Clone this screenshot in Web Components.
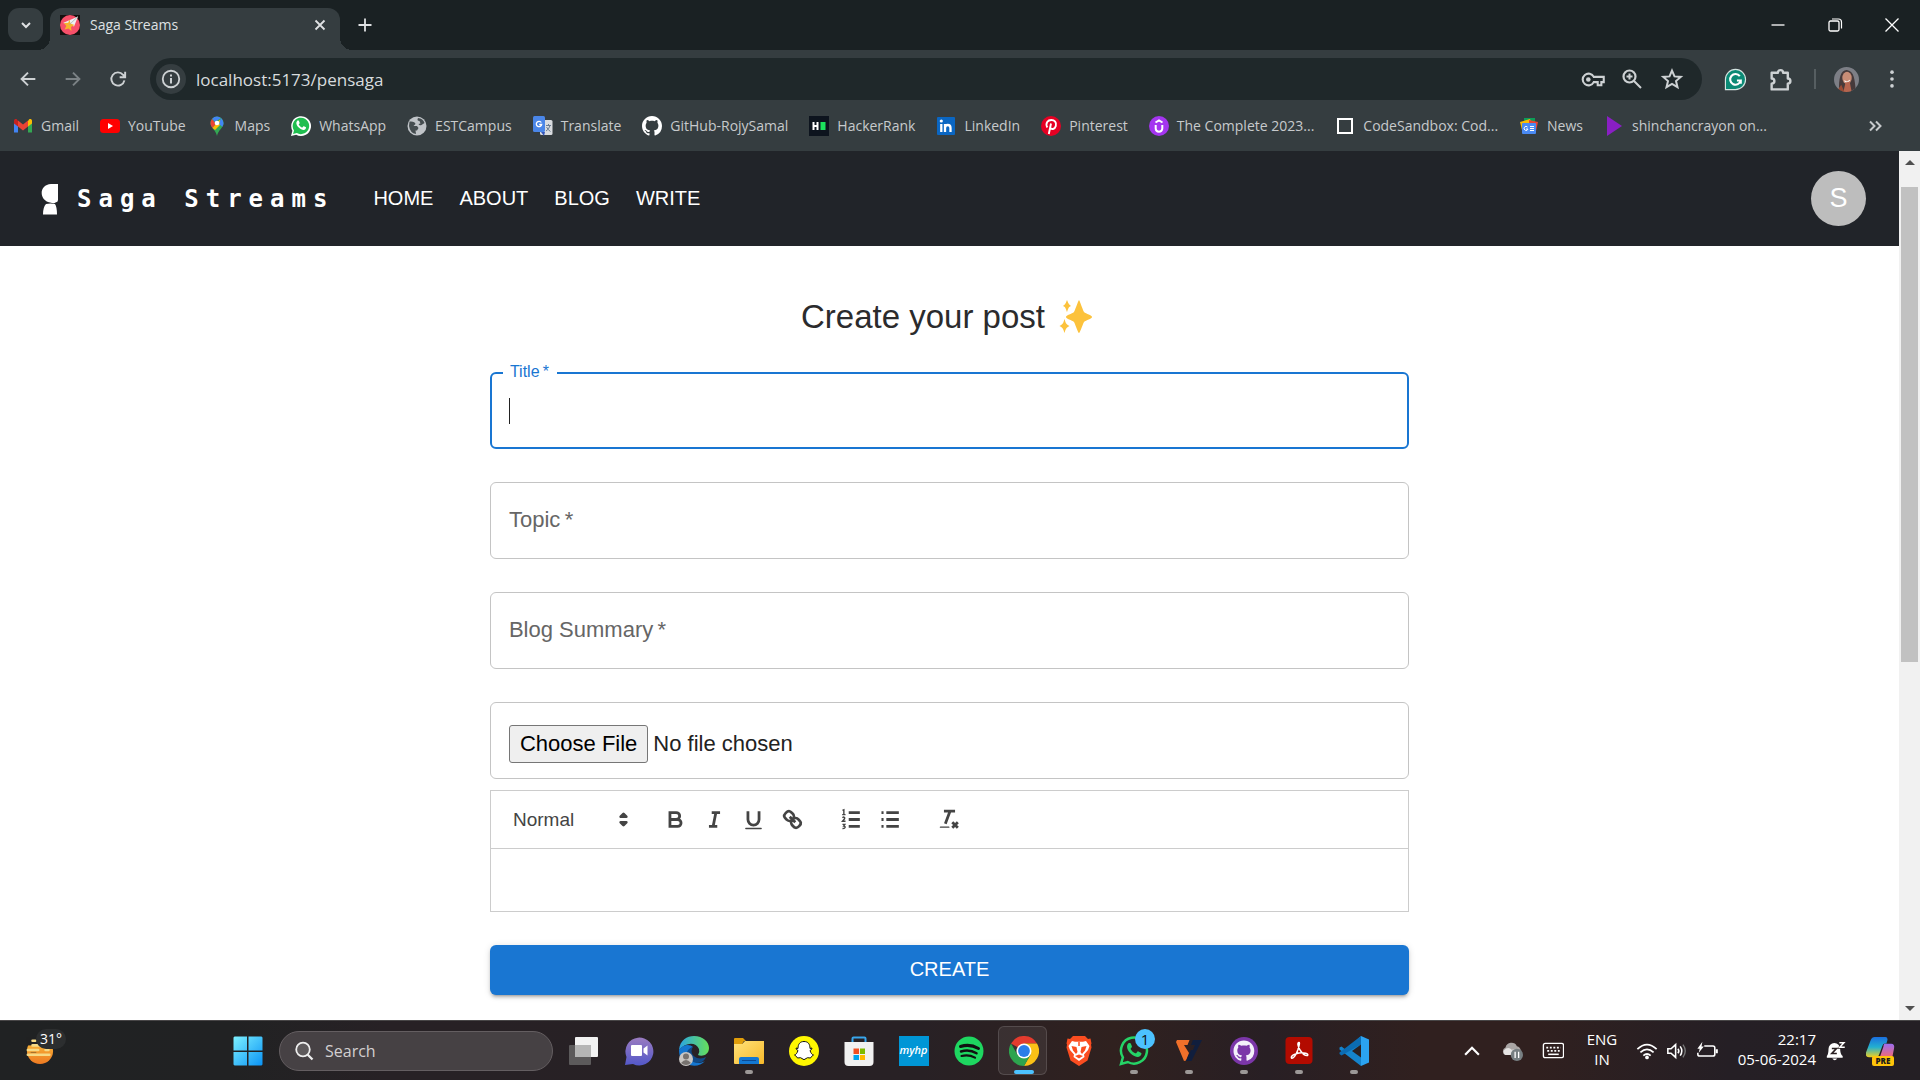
<!DOCTYPE html>
<html lang="en">
<head>
<meta charset="utf-8">
<title>Saga Streams</title>
<style>
html,body{margin:0;height:100%;overflow:hidden;background:#fff}
body{display:flex;flex-direction:column;font-family:"Open Sans","Noto Sans",sans-serif;color:#c7cacc}
</style>
</head>
<body>
<tab-strip label="Saga Streams"></tab-strip>
<address-bar></address-bar>
<bookmark-bar></bookmark-bar>
<page-view>
  <site-navbar>Saga Streams</site-navbar>
  <post-form></post-form>
</page-view>
<task-bar></task-bar>

<script>
const S = (box, body, extra = '') => `<svg viewBox="${box}" ${extra}>${body}</svg>`;
const line = (d, w = 2, c = 'currentColor') => `<path d="${d}" fill="none" stroke="${c}" stroke-width="${w}"/>`;
const fill = (d, c = 'currentColor') => `<path d="${d}" fill="${c}"/>`;
const OCTO = 'M8 0C3.58 0 0 3.58 0 8c0 3.54 2.29 6.53 5.47 7.59.4.07.55-.17.55-.38 0-.19-.01-.82-.01-1.49-2.01.37-2.53-.49-2.69-.94-.09-.23-.48-.94-.82-1.13-.28-.15-.68-.52-.01-.53.63-.01 1.08.58 1.23.82.72 1.21 1.87.87 2.33.66.07-.52.28-.87.51-1.07-1.78-.2-3.64-.89-3.64-3.95 0-.87.31-1.59.82-2.15-.08-.2-.36-1.02.08-2.12 0 0 .67-.21 2.2.82.64-.18 1.32-.27 2-.27s1.36.09 2 .27c1.53-1.04 2.2-.82 2.2-.82.44 1.1.16 1.92.08 2.12.51.56.82 1.27.82 2.15 0 3.07-1.87 3.75-3.65 3.95.29.25.54.73.54 1.48 0 1.07-.01 1.93-.01 2.2 0 .21.15.46.55.38A8.01 8.01 0 0 0 16 8c0-4.42-3.58-8-8-8z';
const PHONE = 'M7.2 6.2c.3-.6.6-.7 1-.7h.6c.3 0 .5.1.7.6l.8 2c.1.3.1.5-.1.8l-.8 1c-.2.2-.2.4 0 .7.9 1.5 2 2.5 3.600 3.200.3.1.5.1.7-.1l1-1.200c.2-.3.5-.3.8-.2l2 1c.4.2.5.4.5.7-.1 1.500-1.200 2.600-2.700 2.700-1.800.1-4-.9-6-2.800C7.400 12 6.400 10 6.400 8.300c0-.8.3-1.500.8-2.100z';
const ICONS = {
 chevdown: S('0 0 20 20', line('M6 8l4 4 4-4', 2)),
 favicon: S('0 0 20 20', '<rect width="20" height="20" fill="#15100f"/><circle cx="10" cy="10" r="10" fill="#f8506a"/><path d="M3 8l15-6.500-4 10-4-2z" fill="#eef1f3"/><path d="M9.500 4.500l1 4 4 1.500-3.500 2 .5 4-3-2.500-4 1 1.800-3.500L4 8l4.200-.2z" fill="#f7b52d"/><path d="M18 1.500L9 10" stroke="#9aa" stroke-width=".7"/>'),
 x: S('0 0 20 20', line('M5.500 5.500l9 9m0-9l-9 9', 1.800)),
 plus: S('0 0 20 20', line('M10 3.500v13M3.500 10h13', 1.800)),
 min: S('0 0 20 20', line('M3.500 10h13', 1.300, '#fff')),
 restore: S('0 0 20 20', '<rect x="4" y="6" width="10" height="10" rx="1.500" fill="none" stroke="#fff" stroke-width="1.300"/><path d="M7 4h6.500q3 0 3 3v6.500" fill="none" stroke="#fff" stroke-width="1.200"/>'),
 close: S('0 0 20 20', line('M3.500 3.500l13 13m0-13l-13 13', 1.300, '#fff')),
 back: S('0 0 24 24', line('M20 12H5.500M12 5l-7 7 7 7', 2.100)),
 fwd: S('0 0 24 24', line('M4 12h14.500M12 5l7 7-7 7', 2.100)),
 reload: S('0 0 24 24', line('M19 13.500A7.200 7.200 0 1 1 17.500 7.400L19.500 9.300M19.800 4v6h-6', 2.100)),
 info: S('0 0 24 24', '<circle cx="12" cy="12" r="9" fill="none" stroke="currentColor" stroke-width="2"/><path d="M12 11v6M12 7v2.200" stroke="currentColor" stroke-width="2.200"/>'),
 key: S('0 0 24 24', '<path d="M13.200 9.500A5.600 5.600 0 1 0 13.200 14.500H17V17.500h3.500V14.500H22.800V9.500z" fill="none" stroke="currentColor" stroke-width="2"/><circle cx="8" cy="12" r="2.200" fill="currentColor"/>'),
 zoomin: S('0 0 24 24', '<circle cx="9.500" cy="9.500" r="6" fill="none" stroke="currentColor" stroke-width="2.200"/><path d="M14 14l7 7M9.500 6.500v6M6.500 9.500h6" stroke="currentColor" stroke-width="2"/>'),
 star: S('0 0 24 24', '<path d="M12 3.600l2.500 5.800 6.300.5-4.800 4.100 1.500 6.200-5.500-3.300-5.500 3.300 1.500-6.200-4.800-4.100 6.300-.5z" fill="none" stroke="currentColor" stroke-width="2"/>'),
 grammarly: S('0 0 24 24', '<path d="M1.500 12a10.500 10.500 0 1 1 10.500 10.500H1.500z" fill="#0b8a75" stroke="#d5e5e2" stroke-width="1.200"/>' + line('M16.500 8.500A5.600 5.600 0 1 0 17.500 13h-4M17.500 12.500v4', 2.200, '#fff')),
 puzzle: S('0 0 24 24', '<path d="M3.500 5.500h6a2.500 2.500 0 0 1 5 0h4.500v5.500a2.500 2.500 0 0 1 0 5v5.500H3.500V16c3.500 0 3.500-5 0-5z" fill="none" stroke="currentColor" stroke-width="2.300" stroke-linejoin="round"/>'),
 face: S('0 0 24 24', '<defs><clipPath id="f"><circle cx="12" cy="12" r="12"/></clipPath></defs><g clip-path="url(#f)"><rect width="24" height="24" fill="#7d7f86"/><path d="M5 24C4 10 7 2 13 3s7 8 8 21z" fill="#463a3b"/><ellipse cx="12.500" cy="10.500" rx="4.500" ry="6" fill="#c98d76"/><path d="M10 13q3 3 5-.5" stroke="#fff" fill="none"/><path d="M9 24l2-9 4-1 2 10z" fill="#b5654f"/><path d="M2 24l5-7 3 7z" fill="#9a4c35"/></g>'),
 dots: S('0 0 24 24', '<g fill="currentColor"><circle cx="12" cy="4.500" r="2"/><circle cx="12" cy="12" r="2"/><circle cx="12" cy="19.500" r="2"/></g>'),
 more: S('0 0 20 20', line('M5 5.500l4.500 4.500L5 14.500M11 5.500l4.500 4.500-4.500 4.500', 2)),
 gmail: S('0 0 20 20', fill('M1 4.500V16.500h4V10z','#4285f4')+fill('M15 10v6.500h4V4.500z','#34a853')+fill('M15 5v5.500l4-3V5c0-2-2-2.500-3-1.500z','#fbbc04')+fill('M5 5v5.500l-4-3V5c0-2 2-2.500 3-1.500z','#c5221f')+fill('M5 4.500l5 4 5-4v6L10 14.500l-5-4z','#ea4335')),
 youtube: S('0 0 20 20', '<rect y="3" width="20" height="14" rx="3.500" fill="#f00"/>'+fill('M8 7l5 3-5 3z','#fff')),
 maps: S('0 0 20 20', fill('M10 20C9 14 3.500 12 3.500 7A6.500 6.500 0 0 1 16.500 7C16.500 12 11 14 10 20z','#34a853')+fill('M10 .5a6.500 6.500 0 0 0-5 2.400L8 6l6-4A6.500 6.500 0 0 0 10 .5z','#4285f4')+fill('M5 2.900A6.500 6.500 0 0 0 3.500 7c0 2 .8 3.500 2 5L9 8z','#ea4335')+fill('M5.500 12l7.500-8.500L14 8l-6 6z','#fbbc04')+fill('M14 1.900q2.500 2 2.500 5.100c0 1.500-.5 2.700-1.200 3.800L12 8z','#4285f4')+'<circle cx="10" cy="7" r="2.300" fill="#fff"/>'),
 whatsapp: S('0 0 24 24', fill('M0 24l1.700-6.200A11.900 11.900 0 1 1 6.200 22.400z','#fff')+fill('M2.400 21.600l1.200-4.300a9.900 9.900 0 1 1 3.400 3.200z','#1fbe4f')+fill(PHONE,'#fff')),
 globe: S('0 0 20 20', '<circle cx="10" cy="10" r="9.500" fill="#c0c4c8"/>'+fill('M2.500 5.500q5.500-.5 6 2.500l-2 2H10l1.500 2-1.500 2.500H8.500l.5 3.500Q3 17 2 10zM11 2q-1.500 3 1.500 3l1 2.500-2 .5q1 2 3 1l3-2q-1.500-4.500-6.500-5z','#454d50')),
 translate: S('0 0 20 20', '<rect x="7" y="4" width="12.500" height="15" rx="1.500" fill="#d9dcdf"/><rect x="0" y="0" width="12" height="16" rx="1.500" fill="#4a86e8"/><path d="M12 16H8l3 4z" fill="#3556b8"/>'+line('M8.300 6.500A2.700 2.700 0 1 0 8.700 8.500H6.200',1.300,'#fff')+line('M13 9.500h5M15.500 8v1.500M17 9.500q-1 4-4 5.500M13.500 11q1.500 3 4 4.500',1,'#6b7d92')),
 github: S('0 0 16 16', fill(OCTO,'#fff')),
 hackerrank: S('0 0 20 20', '<rect width="20" height="20" fill="#0d141e"/>'+line('M4.500 6v8M8.500 6v8M4.500 10h4',2,'#fff')+'<rect x="11.500" y="6" width="5" height="8" fill="#1be15c"/>'),
 linkedin: S('0 0 20 20', '<rect x="1" y="1" width="18" height="18" rx="1" fill="#0a66c2"/>'+line('M5.300 8v8M9 8v8M9 12c0-4 5.500-4 5.500 0v4',2.300,'#fff')+'<circle cx="5.300" cy="5" r="1.600" fill="#fff"/>'),
 pinterest: S('0 0 20 20', '<circle cx="10" cy="10" r="10" fill="#e60023"/>'+line('M10 7.500L7.800 18M6.300 11.500C4 7 7 4 10.300 4s5.500 2.500 4.500 6-4.500 4-5.500 1.500',1.900,'#fff')),
 udemy: S('0 0 20 20', '<circle cx="10" cy="10" r="10" fill="#a435f0"/>'+line('M6.700 9v3.500c0 4.200 6.600 4.200 6.600 0V9M6.500 6.500L10 4.400 13.500 6.500',2,'#fff')),
 square: S('0 0 20 20', '<rect x="3" y="3" width="14" height="14" fill="none" stroke="#fff" stroke-width="2"/>'),
 news: S('0 0 20 20', '<rect x="5" y="2" width="11" height="8" fill="#0c9d58"/><path d="M1 6l10-3 3 8-11 3z" fill="#fbbc04"/><path d="M10 4l9 2-2 9-7-2z" fill="#ea4335"/><rect x="3" y="7" width="14" height="11" rx="1" fill="#4a8af4"/>'+line('M8.500 11a2 2 0 1 0 .5 2H7M11 10.500h4M11 12.500h4M11 14.500h4',1,'#fff')),
 play: S('0 0 20 20', fill('M3 0L18 10 3 20z','#8a1fc4')),
 brand: S('0 0 18 32', fill('M17 1v16q0 2-2.500 2.500-1 1.500-5.500 0C-2.500 17-2 1.500 10 1zM5 21l4.500-.5 4.500.5q2 3 2 10.500H2Q2 24 5 21z','#fff')),
 sparkles: S('0 0 34 38', '<g fill="#fcc23c"><path d="M20 2c1 1 3 8 5 12 2 2 8 3 8 5s-6 3-8 5c-2 4-4 11-5 11s-3-7-5-11c-2-2-8-3-8-5s6-3 8-5c2-4 4-11 5-12z"/><path d="M8 2c1 2 1 4 4 6-3 1-3 4-4 6-1-2-1-5-4-6 3-2 3-4 4-6zM5.500 21c1 3 1 5 5 7-4 2-4 4-5 7-1-3-1-5-5-7 4-2 4-4 5-7z"/></g>'),
 updown: S('0 0 18 18', '<g fill="currentColor" stroke="currentColor" stroke-width="2" stroke-linejoin="round"><path d="M7 11h4l-2 2zM7 7h4L9 5z"/></g>'),
 bold: S('0 0 18 18', line('M5 4h4.500a2.500 2.500 0 0 1 0 5H5zM5 9h5.500a2.500 2.500 0 0 1 0 5H5z')),
 italic: S('0 0 18 18', line('M7 4h6M5 14h6M8 14l2-10')),
 underline: S('0 0 18 18', line('M5 3v6a4 4 0 0 0 8 0V3')+'<rect x="3" y="15" width="12" height="1" rx=".5" fill="currentColor"/>'),
 link: S('0 0 18 18', line('M7 7l4 4M8.900 4.577a3.476 3.476 0 0 1 .36 4.679A3.476 3.476 0 0 1 4.577 8.900C3.185 7.500 2.035 6.400 4.217 4.217S7.500 3.185 8.900 4.577zM13.423 9.100a3.476 3.476 0 0 0-4.679-.36 3.476 3.476 0 0 0 .36 4.679c1.392 1.392 2.500 2.542 4.679.36S14.815 10.500 13.423 9.100z')),
 ol: S('0 0 18 18', line('M7 4h8M7 9h8M7 14h8')+line('M2.500 2.500l1-.5v3.500M2.300 5.500h2.400M2.500 7.700c1-1 2 0 1.500.8l-1.500 1.800h2.200M2.500 12.500h1.700l-.8 1.200c1.500 0 1.500 2-.9 1.800',1)),
 ul: S('0 0 18 18', line('M6 4h9M6 9h9M6 14h9')+line('M2.500 4h1.500M2.500 9h1.500M2.500 14h1.500')),
 clean: S('0 0 18 18', line('M5 3h8M6 12L9.350 3M11 11l4 4M15 11l-4 4')+'<rect x="2" y="14" width="7" height="1" rx=".5" fill="currentColor"/>'),
 weather: S('0 0 30 30', '<defs><linearGradient id="s" x2="0" y2="1"><stop stop-color="#fbc23c"/><stop offset="1" stop-color="#ee7a22"/></linearGradient></defs><circle cx="15" cy="15" r="14" fill="url(#s)"/><path d="M0 0h30v9H0z" fill="#202122"/><g stroke="#f6da85" stroke-width="2.800" stroke-linecap="round"><path d="M7 4h3M7 9h8M2 14h11M21 14h3M2 19h23"/></g><path d="M5 16.500h6" stroke="#9c6a2a"/>'),
 windows: S('0 0 30 30', '<defs><linearGradient id="w" x2="1" y2="1"><stop stop-color="#7df1ff"/><stop offset="1" stop-color="#0a93f5"/></linearGradient></defs><path fill="url(#w)" d="M1.500.5H14v14H.5V1.500zM15.500.5h13l1 1v13h-14zM.5 16H14v13.500H1.500l-1-1zM15.500 16h14v12.500l-1 1h-13z"/>'),
 search: S('0 0 20 20', '<circle cx="9" cy="8.500" r="6.800" fill="#ffffff22" stroke="#eee" stroke-width="1.800"/>'+line('M13.500 13.500l5 5',2.300,'#eee')),
 taskview: S('0 0 30 30', '<rect x="6" y="1" width="23" height="20" rx="1" fill="#f2f2f2"/><rect x="0" y="9" width="22" height="20" rx="1" fill="#777a" /><rect x="6" y="9" width="16" height="12" fill="#b5b5b5"/>'),
 chat: S('0 0 30 30', '<defs><linearGradient id="c" x2="0" y2="1"><stop stop-color="#9a7bc0"/><stop offset="1" stop-color="#5358c9"/></linearGradient></defs><path d="M1 29l1.500-8A14 14 0 1 1 9 28z" fill="url(#c)"/><rect x="7" y="9" width="11" height="11" rx="1" fill="#fff"/><path d="M19.500 12.500l4-3v10l-4-3z" fill="#fff"/>'),
 edge: S('0 0 30 30', '<defs><linearGradient id="e" x2="1" y2="0"><stop stop-color="#2aa4e4"/><stop offset="1" stop-color="#66e05a"/></linearGradient></defs><path d="M0 14C1 4 8 0 15 0c9 0 15 6 15 12 0 7-7 9-11 7q2-3 1-6C17 6 7 6 0 14z" fill="url(#e)"/><path d="M0 14c4-6 11-6 14-3-5 2-7 9 0 14 5 3 9 2 12 0-4 5-12 6-18 3C2 25 0 20 0 14z" fill="#1476d0"/><path d="M14 11c-3 4-1 9 4 11 4 1 7 0 9-1-3 8-14 8-19-1-1-5 2-8 6-9z" fill="#114a87"/><circle cx="7" cy="23" r="7" fill="#c9c6c3"/><circle cx="7" cy="20.500" r="3" fill="#77726f"/><path d="M2 27q5-6 10 0-5 4-10 0z" fill="#77726f"/>'),
 folder: S('0 0 30 30', '<defs><linearGradient id="fo" x2="1" y2="1"><stop stop-color="#ffe27a"/><stop offset="1" stop-color="#f8b92a"/></linearGradient></defs><path d="M0 3q0-1 1-1h8l3 3h-2l-2 3H0z" fill="#e09d0a"/><path d="M0 8h8l3-3h19v22q0 1-1 1H1q-1 0-1-1z" fill="url(#fo)"/><path d="M5 28v-5q0-2 2-2h16q2 0 2 2v5z" fill="#1478d2"/><path d="M8 24.500h14" stroke="#0b4a94"/>'),
 snap: S('0 0 30 30', '<circle cx="15" cy="15" r="15" fill="#fff700"/><path d="M15 5.500c4 0 6 2.500 6 7l2-.5-.5 1.500-1.500 1c1 3 2 4 3.500 4.500l-2 1.500-1 1.500-3-.3-3.500 2-3.500-2-3 .3-1-1.500-2-1.500C7 18.500 8 17.500 9 14.500l-1.500-1L7 12l2 .5c0-4.500 2-7 6-7z" fill="#fff" stroke="#111" stroke-width="1"/>'),
 store: S('0 0 30 30', '<path d="M8.500 7V2.500q0-1 1-1h11q1 0 1 1V7" fill="none" stroke="#38a6ec" stroke-width="2"/><path d="M.5 6h29v20q0 4-4 4h-21q-4 0-4-4z" fill="#f1f1f1"/><path d="M9.500 12.500H15V18H9.500z" fill="#f25022"/><path d="M16 12.500h5V18h-5z" fill="#7fba00"/><path d="M9.500 19H15v5H9.500z" fill="#00a4ef"/><path d="M16 19h5v5h-5z" fill="#ffb900"/>'),
 spotify: S('0 0 30 30', '<circle cx="15" cy="15" r="14.500" fill="#1ed760"/><g fill="none" stroke="#111" stroke-linecap="round"><path d="M6.500 10.500q9.500-3 18 2" stroke-width="3"/><path d="M7 15.500q8.500-2.500 15.500 1.800" stroke-width="2.500"/><path d="M7.500 20q7-2 13.500 1.600" stroke-width="2.200"/></g>'),
 chrome: S('0 0 30 30', fill('M15 15L2 7.500A15 15 0 0 1 28 7.500H15z','#e33b2e')+fill('M15 7.500h13A15 15 0 0 1 15 30l6.500-11.300z','#fbc116')+fill('M2 7.500A15 15 0 0 0 15 30l6.500-11.300L15 22.500 8.500 18.800z','#2da44e')+'<circle cx="15" cy="15" r="7.500" fill="#fff"/><circle cx="15" cy="15" r="5.900" fill="#2a7de9"/>'),
 brave: S('0 0 30 30', fill('M9 0h12l3 3 2.500-.5 1 5-.5 1 .5 3-4 13L15 30 6.500 24.500l-4-13 .5-3-.5-1 1-5L6 3z','#fb4d20')+fill('M8 5l3 .8h8L22 5l3.500 5-1.500 4-4 4.500.5 2.500-5.500 4-5.500-4 .5-2.500L6 14l-1.500-4z','#fff')+fill('M7.500 10l5 1 1 5-1.500 2-3-3.500zM22.500 10l-5 1-1 5 1.500 2 3-3.500zM11 20l4-1.500 4 1.500-4 2.500z','#fb4d20')+line('M15 6v4',1.500,'#fb4d20')),
 wa2: S('0 0 24 24', '<path d="M1.600 22.400l1.500-5.300a10.400 10.400 0 1 1 3.900 3.700z" fill="none" stroke="#25d366" stroke-width="2"/>'+fill(PHONE,'#25d366')),
 vv: S('0 0 30 30', fill('M3 4h12.500l-2 5H10l5 8-3 7.500-2 .5L2 6z','#f0702a')+fill('M19 4h9L17.500 25H12l5-11h2l2-5h-4z','#101e3d')),
 gh2: S('0 0 30 30', '<circle cx="15" cy="15" r="14" fill="#7b36a8"/><g transform="translate(4.500 4.500) scale(1.300)">'+fill(OCTO,'#f4f0fa')+'</g>'),
 acrobat: S('0 0 30 30', '<rect x="1.500" y="1" width="27" height="27" rx="4" fill="#b30b00"/>'+line('M15 6.500c-2 0-1 4 1 7.500 2 3 5 6 7.500 5.500 2-2-4-3-8.500-2.500-4 .5-8.500 3-7.500 5 2 1 5-4 6.500-8.500 1-3.500 2-7 1-7z',1.500,'#fff')),
 vscode: S('0 0 30 30', fill('M22 0L7 14 2.500 10.500.5 11.500v2L22 30z','#1583cc')+fill('M2.500 19.500L.5 18v-1.500L22 0v8.500z','#0b6cb3')+fill('M22 0l8 3.500v23L22 30z','#2ba3f1')+fill('M22 8.500v13L13 15z','#2a2022')),
 chevup: S('0 0 24 24', line('M4.500 16l7.500-7.500 7.500 7.500',2.400,'#fff')),
 cloud: S('0 0 24 24', fill('M4 17a4.500 4.500 0 0 1 0-8.500A7 7 0 0 1 17 7q4 1 4.500 5l-9 5z','#a9a5a4')+fill('M2 12q5-5 9-1l8-1q-4 7-9 7H4q-3-1-2-5z','#e6e4e3')+'<circle cx="17" cy="17" r="7" fill="#777f82"/>'+line('M15 13.500v7M19 13.500v7',1.500,'#fff')),
 keyboard: S('0 0 24 24', '<rect x="2.500" y="4.500" width="21" height="15" rx="2" fill="none" stroke="#fff" stroke-width="1.400"/>'+`<path d="M5.500 9h15M6.500 12.500h13" stroke="#fff" stroke-width="1.800" stroke-dasharray="2 1.700"/>`+line('M7.500 16h11',1.600,'#fff')),
 wifi: S('0 0 24 24', line('M1.500 10q10.500-10 21 0M4.800 13.500q7.200-6.500 14.400 0M8 17q4-3.500 8 0',1.900,'#fff')+'<circle cx="12" cy="19" r="2" fill="#fff"/>'),
 sound: S('0 0 24 24', line('M2 9.500h3.500L10.500 5v14L5.500 14.500H2zM13 9.500q2 2.500 0 5M15.500 7q3.500 5 0 10',1.700,'#fff')+line('M18.500 5q5 7 0 14',1.500,'#777')),
 battery: S('0 0 24 24', '<path d="M9 6.500h9.500q2 0 2 2v7q0 2-2 2H4q-2 0-2-2V14" fill="none" stroke="#fff" stroke-width="1.700"/><path d="M21.500 10h2.300v4.500h-2.300zM7 2L1.500 9.500H4L3 14l5.500-7H6z" fill="#fff"/>'),
 bell: S('0 0 24 24', fill('M1 18q2-2 2-8.500a7 7 0 0 1 14 0q0 6.500 3 8.500v2H1zM7.500 21h6q-3 4-6 0z','#fff')+line('M7 9h5.500L7 15h6',2,'#2a2022')+line('M16 1.500h6L17 7.500h6',3.500,'#2a2022')+line('M16 2h5.500L16.500 7.500h6',1.800,'#fff')),
 copilot: S('0 0 30 30', '<defs><linearGradient id="p1" x2="0" y2="1"><stop stop-color="#1b6fe0"/><stop offset=".5" stop-color="#22b0d0"/><stop offset="1" stop-color="#f0d020"/></linearGradient><linearGradient id="p2" x2="0" y2="1"><stop stop-color="#9a6cf0"/><stop offset="1" stop-color="#fa6a6a"/></linearGradient></defs><path d="M9 1h11q3 0 2 4l-1 3q-3-1-4 2l-3 8q-1 4-5 4H3q-4 0-3-5L5 4q1-3 4-3z" fill="url(#p1)"/><path d="M19 8h7q4 0 3 5l-2 10H11q3 0 4-3l3-9q0-2 1-3z" fill="url(#p2)"/>')
};

class Base extends HTMLElement {
  connectedCallback() {
    if (this.shadowRoot) return;
    const t = document.createElement('template');
    t.innerHTML = `<style>:host,*{box-sizing:border-box}button,input,select{font:inherit;color:inherit;margin:0}button{display:flex;align-items:center;justify-content:center;padding:0;border:0;background:none}a{color:inherit;text-decoration:none}${this.css()}</style>${this.html()}`;
    this.attachShadow({ mode: 'open' }).append(t.content.cloneNode(true));
  }
  css() { return ''; }
  html() { return '<slot></slot>'; }
}
const define = (name, css, html) => customElements.define(name, class extends Base {
  css() { return css; }
  html() { return typeof html === 'function' ? html(this) : html; }
});
const ico = (n, s) => `<ui-icon name="${n}" size="${s}"></ui-icon>`;

customElements.define('ui-icon', class extends Base {
  css() { const s = this.getAttribute('size'); return `:host{display:block;flex:none;width:${s}px;height:${s}px}svg{display:block;width:100%;height:100%}`; }
  html() { return ICONS[this.getAttribute('name')]; }
});

define('tab-strip', `
:host{display:flex;align-items:flex-end;height:50px;flex:none;background:#1a2123;color:#dfe1e3}
.list{width:35px;height:34px;margin:0 7px 8px 8px;border-radius:11px;background:#353d40}
.tab{position:relative;display:flex;align-items:center;width:290px;height:42px;padding:0 10px 8px;border-radius:12px 12px 0 0;background:#353d40;font-size:14px}
.tab::before,.tab::after{content:"";position:absolute;bottom:0;width:12px;height:12px}
.tab::before{left:-12px;background:radial-gradient(circle at 0 0,transparent 12px,#353d40 12px)}
.tab::after{right:-12px;background:radial-gradient(circle at 100% 0,transparent 12px,#353d40 12px)}
.tab span{flex:1;padding-left:10px;line-height:20px}
.new{width:50px;height:50px}
.win{display:flex;margin-left:auto}
.win button{width:57px;height:50px}`,
h => `<button class="list" aria-label="Search tabs">${ico('chevdown',20)}</button>
<div class="tab">${ico('favicon',20)}<span>${h.getAttribute('label')}</span><button aria-label="Close tab">${ico('x',20)}</button></div>
<button class="new" aria-label="New tab">${ico('plus',20)}</button>
<div class="win"><button aria-label="Minimise">${ico('min',20)}</button><button aria-label="Restore">${ico('restore',20)}</button><button aria-label="Close">${ico('close',20)}</button></div>`);

define('address-bar', `
:host{display:flex;align-items:center;height:50px;flex:none;padding:8px 5px 0 5px;background:#353d40;color:#cdd1d3}
.nav{width:45px;height:42px}.off{color:#7b8285}
.box{flex:1;display:flex;align-items:center;height:42px;margin:0 11px 0 10px;padding:0 10px 0 6px;border-radius:21px;background:#1f282a}
.info{width:30px;height:30px;border-radius:15px;background:#353d40}
input{flex:1;min-width:0;border:0;background:none;outline:0;padding:0 10px;height:30px;font-size:17px;color:#d8dcde}
.box button:not(.info){width:40px;height:40px}
.ext{width:45px;height:42px}
hr{width:2px;height:20px;border:0;margin:0 8px 0 11px;background:#565e61}
.menu{width:46px;height:42px}`,
`<button class="nav" aria-label="Back">${ico('back',22)}</button><button class="nav off" aria-label="Forward">${ico('fwd',22)}</button><button class="nav" aria-label="Reload">${ico('reload',22)}</button>
<div class="box"><button class="info" aria-label="Site information">${ico('info',22)}</button><input aria-label="Address" value="localhost:5173/pensaga"><button aria-label="Passwords">${ico('key',25)}</button><button aria-label="Zoom">${ico('zoomin',24)}</button><button aria-label="Bookmark">${ico('star',24)}</button></div>
<button class="ext" aria-label="Grammarly">${ico('grammarly',23)}</button><button class="ext" aria-label="Extensions">${ico('puzzle',25)}</button><hr><button class="ext" aria-label="Profile">${ico('face',25)}</button><button class="menu" aria-label="Menu">${ico('dots',22)}</button>`);

define('bookmark-item', `
:host{display:block}
a{display:flex;align-items:center;gap:8px;font-size:14px;line-height:20px;white-space:nowrap}`,
h => `<a href="#">${ico(h.getAttribute('icon'),20)}<span><slot></slot></span></a>`);

define('bookmark-bar', `
:host{display:flex;align-items:center;gap:21px;height:51px;flex:none;padding:0 35px 0 13px;background:#353d40}
button{margin-left:auto}`,
[['gmail','Gmail'],['youtube','YouTube'],['maps','Maps'],['whatsapp','WhatsApp'],['globe','ESTCampus'],['translate','Translate'],['github','GitHub-RojySamal'],['hackerrank','HackerRank'],['linkedin','LinkedIn'],['pinterest','Pinterest'],['udemy','The Complete 2023...'],['square','CodeSandbox: Cod...'],['news','News'],['play','shinchancrayon on...']].map(([i,t]) => `<bookmark-item icon="${i}">${t}</bookmark-item>`).join('') + `<button aria-label="More bookmarks">${ico('more',20)}</button>`);

define('page-view', `
:host{display:flex;flex:1;min-height:0;background:#fff;color:#333;font-family:"Liberation Sans",Arial,sans-serif}
main{flex:1;min-width:0;overflow:hidden}
.bar{display:flex;flex-direction:column;align-items:center;width:21px;background:#f1f1f1}
.thumb{width:17px;height:475px;margin-bottom:auto;background:#c1c1c1}
i{border:5px solid transparent}
.up{border-bottom-color:#505050;border-top:0;margin:9px 0 22px}
.down{border-top-color:#505050;border-bottom:0;margin-bottom:9px}`,
`<main><slot></slot></main><div class="bar"><i class="up"></i><div class="thumb"></div><i class="down"></i></div>`);

define('site-navbar', `
:host{display:flex;align-items:center;height:95px;padding:0 33px 0 41px;background:#212429;color:#fff}
.brand{display:flex;align-items:center;gap:18px;font:700 24px/32px "DejaVu Sans Mono",monospace;letter-spacing:7px}
.brand svg{display:block;width:18px;height:32px}
nav{display:flex;gap:26px;margin-left:39px;padding-bottom:2px;font-size:20px;line-height:24px}
.avatar{width:55px;height:55px;margin-left:auto;border-radius:50%;background:#bdbdbd;font-size:27px;color:#fff}`,
`<a class="brand" href="#">${ICONS.brand}<span><slot></slot></span></a><nav><a href="#">HOME</a><a href="#">ABOUT</a><a href="#">BLOG</a><a href="#">WRITE</a></nav><button class="avatar" aria-label="Account">S</button>`);

define('outlined-field', `
:host{display:block;position:relative;height:77px;border:1px solid #c4c4c4;border-radius:6px;font-size:22px;line-height:32px}
:host([active]){border:2px solid #1976d2}
input{display:block;width:100%;height:100%;padding:0 18px;border:0;outline:0;background:none}
:host([active]) input{background:linear-gradient(#222,#222) 17px 50%/1px 26px no-repeat}
label{position:absolute;left:18px;top:21px;color:#666;pointer-events:none}
:host([active]) label{left:11px;top:-13px;padding:0 8px 0 7px;background:#fff;color:#1976d2;font-size:16px;line-height:22px}
input[type=file]{padding:22px 18px 0;color:#222}
input[type=file]::file-selector-button{font:inherit;color:#000;height:38px;margin:0 5px 0 0;padding:0 10px;border:1px solid #767676;border-radius:3px;background:#efefef}`,
h => h.getAttribute('type') === 'file' ? `<input type="file" aria-label="${h.getAttribute('label')}">` :
 `<input id="f" type="text" required><label for="f">${h.getAttribute('label')}&thinsp;*</label>`);

define('rich-editor', `
:host{display:block;border:1px solid #ccc;color:#444}
.tools{display:flex;align-items:center;gap:20px;height:58px;padding:0 11px;border-bottom:1px solid #ccc}
.group{display:flex}
.tools button{width:39px;height:33px}
.pick{align-items:center;width:134px}
select{flex:1;min-width:0;appearance:none;border:0;background:none;padding:0 0 0 11px;font-size:19px;line-height:24px}
.area{height:62px;outline:0}`,
`<div class="tools"><div class="group pick"><select aria-label="Text style"><option>Normal</option></select>${ico('updown',25)}</div>
<div class="group">${['bold','italic','underline','link'].map(n=>`<button type="button" aria-label="${n}">${ico(n,25)}</button>`).join('')}</div>
<div class="group"><button type="button" aria-label="Numbered list">${ico('ol',25)}</button><button type="button" aria-label="Bullet list">${ico('ul',25)}</button></div>
<div class="group"><button type="button" aria-label="Clear formatting">${ico('clean',25)}</button></div></div><div class="area" contenteditable="true"></div>`);

define('post-form', `
:host{display:block;padding-top:48px}
form{display:flex;flex-direction:column;gap:33px;width:48.4%;margin:0 auto}
h1{display:flex;justify-content:center;align-items:center;gap:14px;margin:0;padding-right:5px;font-size:33px;line-height:45px;font-weight:400;color:#2b2b2d}
h1 svg{width:34px;height:38px}
.content{display:flex;flex-direction:column;gap:11px}
.submit{width:100%;height:50px;padding-bottom:2px;border-radius:6px;background:#1976d2;color:#fff;font-size:20px;line-height:24px;box-shadow:0 4px 2px -3px #0003,0 3px 3px #0002,0 1px 7px #0002}`,
`<form><h1>Create your post ${ICONS.sparkles}</h1><outlined-field active label="Title"></outlined-field><outlined-field label="Topic"></outlined-field><outlined-field label="Blog Summary"></outlined-field>
<div class="content"><outlined-field type="file" label="Cover image"></outlined-field><rich-editor></rich-editor></div><button class="submit" type="button">CREATE</button></form>`);

define('task-app', `
:host{display:block;position:relative;width:55px;height:59px;flex:none}
button{position:relative;width:100%;height:100%}
:host([current])::before{content:"";position:absolute;inset:5px 4px 5px 2px;border:1px solid #fff2;border-radius:6px;background:#ffffff12}
:host([running])::after,:host([current])::after{content:"";position:absolute;left:24px;bottom:6px;width:8px;height:4px;border-radius:2px;background:#9c9897}
:host([current])::after{left:18px;width:20px;background:#4cc2ff}
.badge{position:absolute;left:29px;top:8px;width:20px;height:20px;border-radius:10px;background:#4cc2ff;color:#111;font-size:15px;line-height:20px;text-align:center}
.hp{width:30px;height:30px;background:#0096d6;color:#fff;font:italic 600 11px/28px "Open Sans",sans-serif;text-align:center}`,
h => `<button aria-label="${h.getAttribute('icon')}">${h.getAttribute('icon') === 'myhp' ? '<span class="hp">myhp</span>' : ico(h.getAttribute('icon'),30)}</button>${h.hasAttribute('badge') ? `<span class="badge">${h.getAttribute('badge')}</span>` : ''}`);

define('task-bar', `
:host{display:flex;align-items:center;height:60px;flex:none;border-top:1px solid #484647;background:linear-gradient(90deg,#202223 0,#212223 12%,#272125 20%,#282125 48%,#30211f 58%,#281f24 66%,#30201f 74%,#30201f 80%,#251f25 90%,#241f24);color:#fff}
.weather{position:relative;display:flex;justify-content:flex-start;width:220px;height:59px;padding-left:26px}
.deg{position:absolute;left:36px;top:8px;width:30px;height:20px;border-radius:10px;background:#2c2e2f;font-size:14px;line-height:20px}
label{display:flex;align-items:center;gap:11px;width:274px;height:40px;margin:0 3px 0 4px;padding:0 14px;border:1px solid #645e61;border-radius:20px;background:#464144}
input{flex:1;min-width:0;border:0;background:none;outline:0;padding:0;font-size:16px}
input::placeholder{color:#d2cfd0;opacity:1}
.tray{display:flex;align-items:center;margin-left:auto;padding-right:13px;font-size:15px;line-height:20px}
.tray button{height:59px}
.w40{width:40px}.w30{width:30px}.w34{width:34px}
.lang,.clock{padding-bottom:3px}
.lang{width:60px;text-align:center}
.clock{width:97px;text-align:right;padding-right:3px}
.pre{position:relative;width:54px}
.pre span{position:absolute;left:19px;top:35px;width:22px;height:10px;border-radius:2px;background:#ffc40a;color:#1b1b1b;font-size:8px;line-height:10px;font-weight:800;text-align:center}`,
`<button class="weather" aria-label="Weather">${ico('weather',28)}<span class="deg">31°</span></button><task-app icon="windows"></task-app>
<label>${ico('search',20)}<input type="text" placeholder="Search" aria-label="Search"></label>
${['taskview','chat','edge','folder running','snap','store','myhp','spotify','chrome current','brave','wa2 running badge=1','vv running','gh2 running','acrobat running','vscode running'].map(s=>`<task-app icon=${s}></task-app>`).join('')}
<div class="tray"><button class="w40" aria-label="Hidden icons">${ico('chevup',22)}</button><button class="w40" aria-label="OneDrive">${ico('cloud',21)}</button><button class="w40" aria-label="Keyboard">${ico('keyboard',23)}</button><div class="lang">ENG<br>IN</div><button class="w30" aria-label="Wi-Fi">${ico('wifi',22)}</button><button class="w30" aria-label="Volume">${ico('sound',22)}</button><button class="w30" aria-label="Battery">${ico('battery',22)}</button><div class="clock">22:17<br>05-06-2024</div><button class="w34" aria-label="Notifications">${ico('bell',20)}</button><button class="pre" aria-label="Copilot">${ico('copilot',29)}<span>PRE</span></button></div>`);
</script>
</body>
</html>
